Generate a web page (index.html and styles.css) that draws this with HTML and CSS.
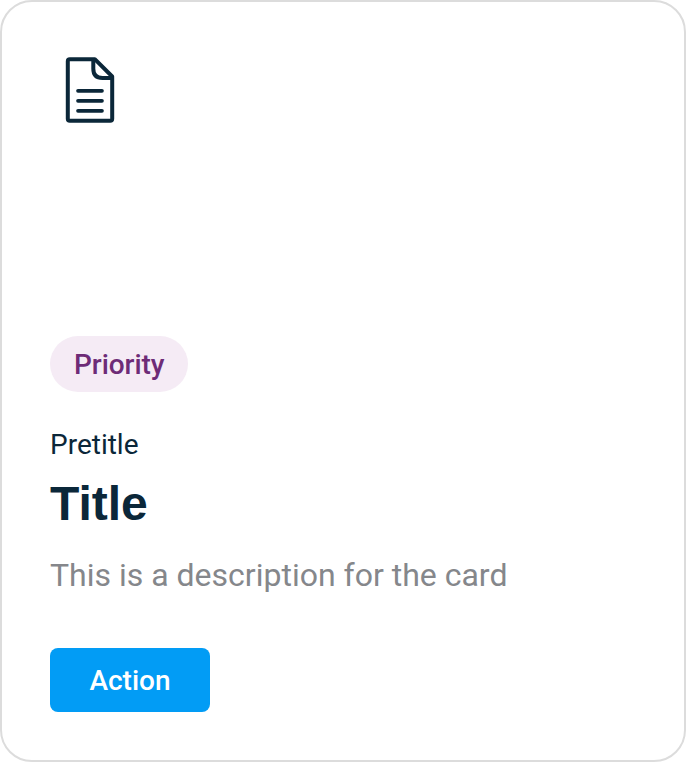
FILE: index.html
```html
<!DOCTYPE html>
<html lang="en">
<head>
<meta charset="utf-8">
<title>Card</title>
<link rel="stylesheet" href="styles.css">
</head>
<body>
<article class="card">
  <svg class="card-icon" width="80" height="80" viewBox="0 0 80 80" fill="none" stroke="currentColor" stroke-width="4" stroke-linejoin="round" stroke-linecap="round" aria-hidden="true">
    <path d="M44.800 9.200H19.800Q17.800 9.200 17.800 11.200V68.700Q17.800 70.700 19.800 70.700H60.200Q62.200 70.700 62.200 68.700V26.500Z"/>
    <path d="M43.300 10V18.800Q43.300 28 52.500 28H61.500"/>
    <path stroke-width="3.700" d="M28 40.800H52M28 50.800H52M28 60.800H52"/>
  </svg>
  <span class="badge">Priority</span>
  <p class="pretitle">Pretitle</p>
  <h2 class="title">Title</h2>
  <p class="description">This is a description for the card</p>
  <button class="action" type="button">Action</button>
</article>
</body>
</html>
```
FILE: styles.css
```css
* { box-sizing: border-box; }
body { margin: 0; background: #fff; font-family: Roboto, sans-serif; }
.card {
  display: flex;
  flex-direction: column;
  align-items: flex-start;
  width: 686px;
  height: 762px;
  padding: 48px;
  border: 2px solid #dcdcdc;
  border-radius: 32px;
  background: #fff;
  color: #0b2739;
}
.card-icon { display: block; }
.badge {
  margin-top: auto;
  width: 138px;
  height: 56px;
  padding: 1px 0 0 24px;
  border-radius: 28px;
  background: #f5ebf5;
  color: #6e2b77;
  font-size: 28px;
  line-height: 56px;
  font-weight: 500;
  letter-spacing: -0.06px;
}
.pretitle { margin: 33px 0 0; font-size: 28px; line-height: 40px; }
.title { margin: 7px 0 0; font: bold 48px/64px "Liberation Sans", sans-serif; }
.description { margin: 15px 0 0; color: #85878b; font-size: 32px; line-height: 48px; }
.action {
  margin: 49px 0 0;
  width: 160px;
  height: 64px;
  padding: 2px 0 0;
  border: 0;
  border-radius: 8px;
  background: #029cf5;
  color: #fff;
  font: 500 28px/62px Roboto, sans-serif;
}
```
